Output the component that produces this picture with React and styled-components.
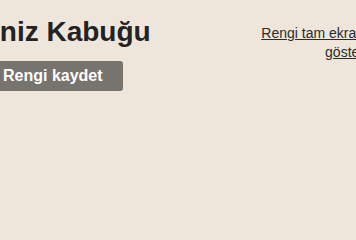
import React from 'react';
import styled, { createGlobalStyle } from 'styled-components';

const GlobalStyle = createGlobalStyle`
  html, body {
    margin: 0;
    padding: 0;
    background: #eee6db;
    overflow: hidden;
  }
  body {
    font-family: "Liberation Sans", Arial, sans-serif;
    color: #262626;
  }
`;

const Page = styled.div`
  width: 400px;
  margin-left: -36px;
  padding-top: 16px;
  display: flex;
  justify-content: space-between;
  align-items: flex-start;
`;

const Main = styled.div`
  display: flex;
  flex-direction: column;
  align-items: flex-start;
`;

const Title = styled.h1`
  margin: 0;
  font-size: 28px;
  line-height: 32px;
  font-weight: 700;
  color: #232323;
`;

const FullscreenLink = styled.a`
  display: block;
  width: 110px;
  margin-top: 8px;
  font-size: 14px;
  line-height: 19px;
  text-align: right;
  color: #2b2b2b;
  text-decoration: underline;
  cursor: pointer;
`;

const Actions = styled.div`
  display: flex;
  margin-top: 13px;
  padding-left: 19px;
`;

const SaveButton = styled.button`
  border: none;
  border-radius: 3px;
  background: #77736e;
  color: #ffffff;
  font-family: "Liberation Sans", Arial, sans-serif;
  font-size: 16px;
  font-weight: 700;
  line-height: 20px;
  padding: 5px 20px;
  cursor: pointer;
`;

export default function App() {
  return (
    <>
      <GlobalStyle />
      <Page>
        <Main>
          <Title>Deniz Kabuğu</Title>
          <Actions>
            <SaveButton>Rengi kaydet</SaveButton>
          </Actions>
        </Main>
        <FullscreenLink>Rengi tam ekran göster</FullscreenLink>
      </Page>
    </>
  );
}
